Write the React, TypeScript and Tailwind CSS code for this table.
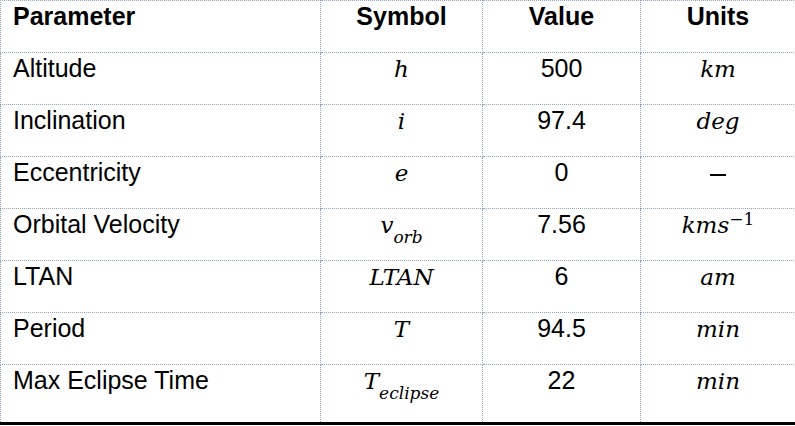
import * as React from 'react';

type Row = {
  param: string;
  symbol: React.ReactNode;
  value: string;
  units: React.ReactNode;
};

const Sub = ({ children }: { children: React.ReactNode }) => (
  <sub className="relative top-[4px] align-sub text-[17px]">{children}</sub>
);

const rows: Row[] = [
  { param: 'Altitude', symbol: 'h', value: '500', units: 'km' },
  { param: 'Inclination', symbol: 'i', value: '97.4', units: 'deg' },
  {
    param: 'Eccentricity',
    symbol: 'e',
    value: '0',
    units: <span className="inline-block h-[2px] w-[16px] bg-black align-middle" />,
  },
  {
    param: 'Orbital Velocity',
    symbol: (
      <>
        v<Sub>orb</Sub>
      </>
    ),
    value: '7.56',
    units: (
      <>
        kms<sup className="relative -top-[8px] text-[17px] not-italic">−1</sup>
      </>
    ),
  },
  { param: 'LTAN', symbol: 'LTAN', value: '6', units: 'am' },
  { param: 'Period', symbol: 'T', value: '94.5', units: 'min' },
  {
    param: 'Max Eclipse Time',
    symbol: (
      <>
        T<Sub>eclipse</Sub>
      </>
    ),
    value: '22',
    units: 'min',
  },
];

const cell = 'border border-dotted border-[#8fa2bf] align-top pt-[1px] leading-[28px]';
const math = "font-['DejaVu_Serif',serif] italic text-[23px]";

export default function App() {
  return (
    <div className="w-[795px] h-[426px] bg-white font-['Liberation_Sans',Arial,sans-serif] text-[25px] text-black">
      <table className="w-[795px] table-fixed border-collapse border-b-[3px] border-b-black">
        <colgroup>
          <col className="w-[320px]" />
          <col className="w-[162px]" />
          <col className="w-[158px]" />
          <col className="w-[155px]" />
        </colgroup>
        <thead>
          <tr className="h-[52px]">
            <th className={`${cell} pl-[12px] text-left font-bold`}>Parameter</th>
            <th className={`${cell} text-center font-bold`}>Symbol</th>
            <th className={`${cell} text-center font-bold`}>Value</th>
            <th className={`${cell} text-center font-bold`}>Units</th>
          </tr>
        </thead>
        <tbody>
          {rows.map((r, i) => (
            <tr key={r.param} className={i === rows.length - 1 ? 'h-[59px]' : 'h-[52px]'}>
              <td className={`${cell} pl-[12px]`}>{r.param}</td>
              <td className={`${cell} text-center`}>
                <span className={math}>{r.symbol}</span>
              </td>
              <td className={`${cell} text-center`}>{r.value}</td>
              <td className={`${cell} text-center`}>
                <span className={math}>{r.units}</span>
              </td>
            </tr>
          ))}
        </tbody>
      </table>
    </div>
  );
}
